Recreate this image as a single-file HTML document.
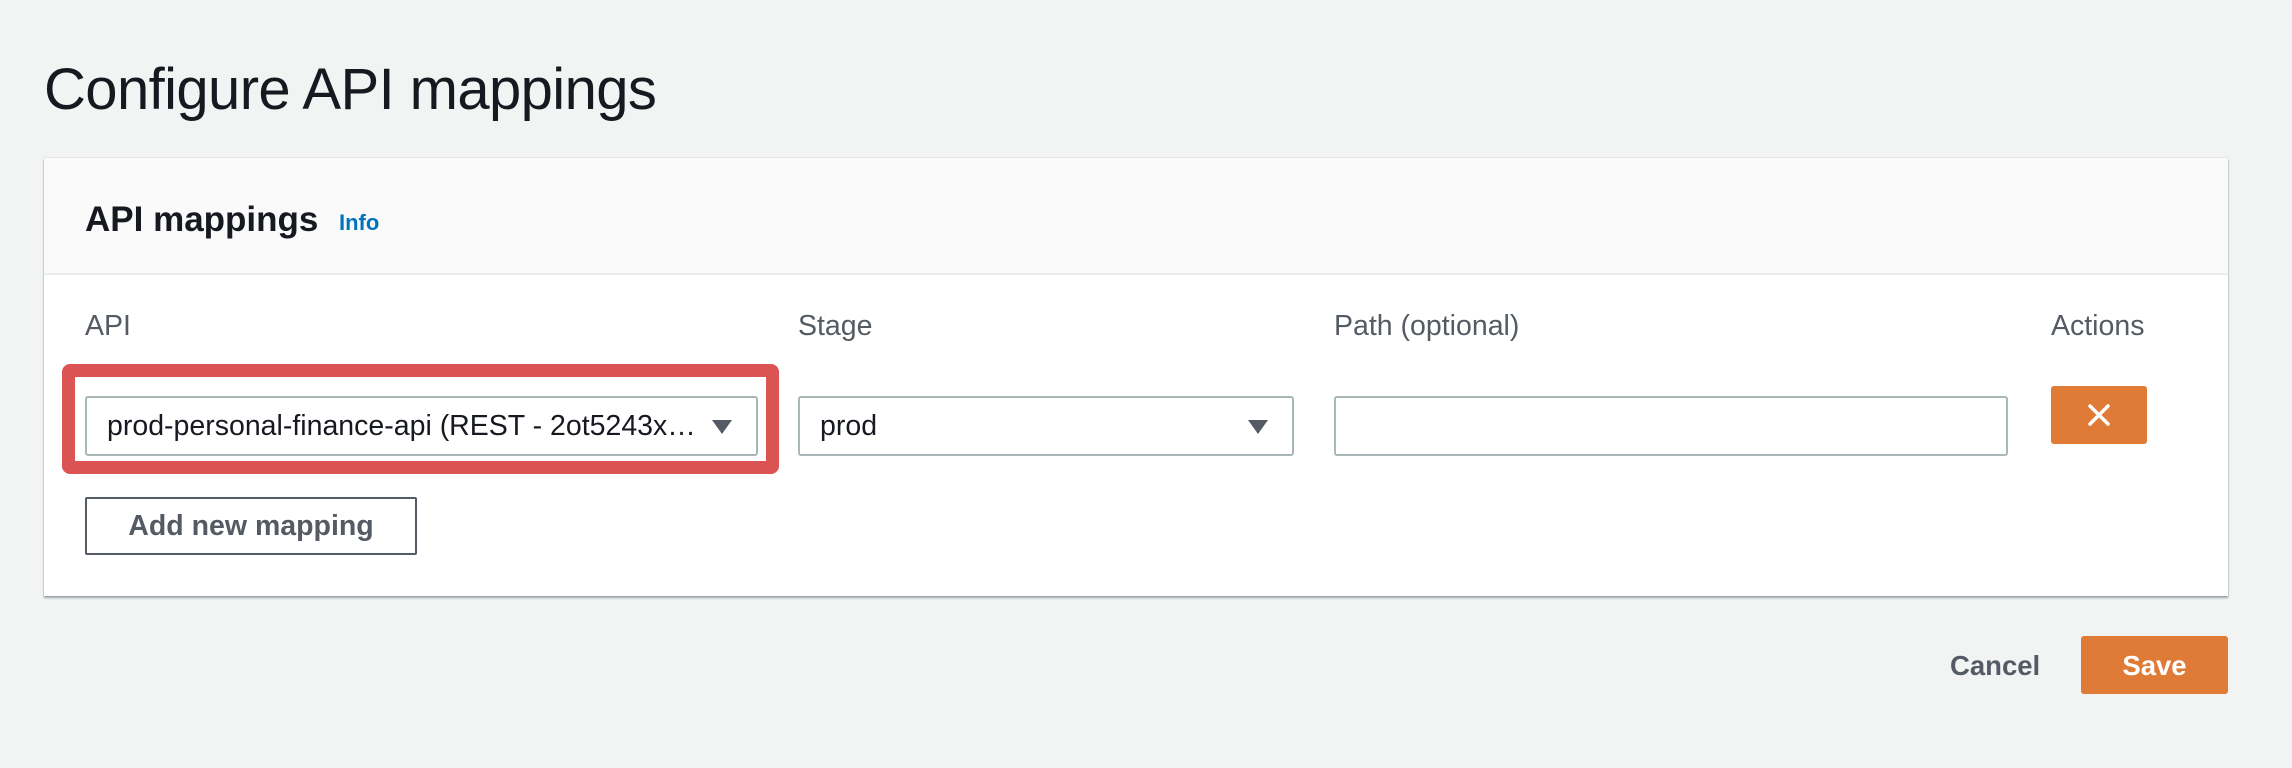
<!DOCTYPE html>
<html><head><meta charset="utf-8"><style>
*{box-sizing:border-box;margin:0;padding:0}
body{width:2292px;height:768px;background:#f2f3f3;font-family:"Liberation Sans",Arial,sans-serif;position:relative;overflow:hidden;color:#16191f}
.abs{position:absolute}
h1{position:absolute;left:44px;top:55px;font-size:58px;font-weight:normal;letter-spacing:-0.6px;color:#16191f;line-height:70px}
.panel{left:44px;top:158px;width:2184px;height:438px;background:#fff;box-shadow:0 2px 2px rgba(0,28,36,.35),0 0 1px rgba(0,28,36,.3)}
.ph{left:0;top:0;width:100%;height:117px;background:#fafafa;border-bottom:2px solid #eaeded}
.lbl{font-size:28.5px;color:#545b64;top:310px}
.sel{top:396px;height:60px;border:2px solid #aab7b8;border-radius:3px;background:#fff;font-size:28.5px;line-height:56px;padding-left:20px;color:#16191f;white-space:nowrap}
.tri{position:absolute;right:24px;top:22px;width:0;height:0;border-left:10px solid transparent;border-right:10px solid transparent;border-top:14px solid #545b64}
</style></head><body>
<h1>Configure API mappings</h1>
<div class="abs panel">
 <div class="abs ph"></div>
</div>
<div class="abs" style="left:85px;top:200px;font-size:35px;font-weight:bold;color:#16191f">API mappings</div>
<div class="abs" style="left:339px;top:210px;font-size:22px;font-weight:bold;color:#0073bb">Info</div>

<div class="abs lbl" style="left:85px">API</div>
<div class="abs lbl" style="left:798px">Stage</div>
<div class="abs lbl" style="left:1334px">Path (optional)</div>
<div class="abs lbl" style="left:2051px">Actions</div>

<div class="abs" style="left:62px;top:364px;width:717px;height:110px;border:13px solid #db5352;border-radius:8px"></div>
<div class="abs sel" style="left:85px;width:673px">prod-personal-finance-api (REST - 2ot5243x…<span class="tri"></span></div>
<div class="abs sel" style="left:798px;width:496px">prod<span class="tri"></span></div>
<div class="abs sel" style="left:1334px;width:674px"></div>

<div class="abs" style="left:2051px;top:386px;width:96px;height:58px;background:#df7a37;border-radius:3px">
 <svg width="96" height="58" viewBox="0 0 96 58"><path d="M39 20L57 38M57 20L39 38" stroke="#fff" stroke-width="3.5" stroke-linecap="round"/></svg>
</div>

<div class="abs" style="left:85px;top:497px;width:332px;height:58px;border:2px solid #545b64;border-radius:2px;font-size:28.5px;font-weight:bold;color:#545b64;text-align:center;line-height:54px">Add new mapping</div>

<div class="abs" style="left:1950px;top:650px;font-size:27.5px;font-weight:bold;color:#545b64">Cancel</div>
<div class="abs" style="left:2081px;top:636px;width:147px;height:58px;background:#df7a37;border-radius:3px;font-size:27.5px;font-weight:bold;color:#fff;text-align:center;line-height:60px">Save</div>
</body></html>
